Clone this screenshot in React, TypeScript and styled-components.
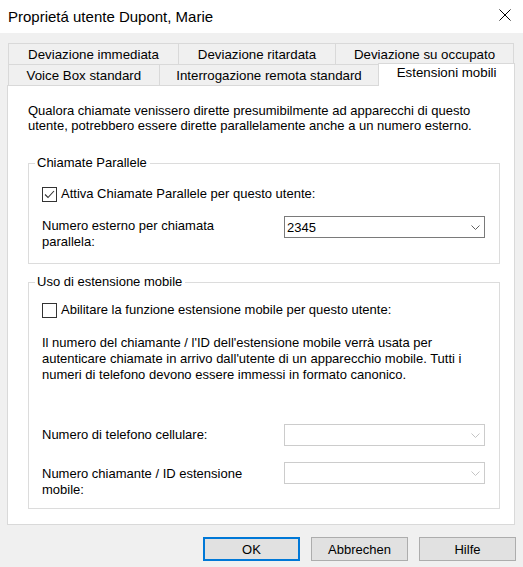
import * as React from 'react';
import styled, {createGlobalStyle} from 'styled-components';

const GlobalStyle = createGlobalStyle`
  html, body {
    margin: 0;
    padding: 0;
    background: #f0f0f0;
  }
  body {
    font-family: "Liberation Sans", Arial, sans-serif;
    font-size: 13px;
    color: #000;
  }
`;

const Window = styled.div`
  width: 523px;
  height: 567px;
  display: flex;
  flex-direction: column;
  background: #f0f0f0;
  overflow: hidden;
`;

const TitleBar = styled.div`
  height: 33px;
  flex-shrink: 0;
  background: #fff;
  display: flex;
  align-items: center;
  justify-content: space-between;
  padding: 0 12px 0 8px;
  font-size: 15px;
`;

const CloseButton = styled.svg`
  width: 12px;
  height: 12px;
  margin-bottom: 4px;
`;

const Body = styled.div`
  padding: 10px 8px 0 7px;
  display: flex;
  flex-direction: column;
`;

const TabRow = styled.div`
  display: flex;
  align-items: flex-start;
  height: 21px;
  padding-left: 1px;
`;

const Tab = styled.div<{ $w: number; $active?: boolean }>`
  box-sizing: border-box;
  width: ${p => p.$w}px;
  height: ${p => (p.$active ? 23 : 21)}px;
  margin-top: ${p => (p.$active ? -1 : 0)}px;
  margin-left: -1px;
  &:first-child {
    margin-left: 0;
  }
  border: 1px solid #d9d9d9;
  border-bottom: 0;
  background: ${p => (p.$active ? '#fff' : '#f0f0f0')};
  position: relative;
  z-index: ${p => (p.$active ? 2 : 1)};
  display: flex;
  justify-content: center;
  align-items: ${p => (p.$active ? 'flex-start' : 'center')};
  padding-top: ${p => (p.$active ? 1 : 0)}px;
  font-size: 13.3px;
  white-space: nowrap;
`;

const Panel = styled.div`
  box-sizing: border-box;
  height: 440px;
  width: 508px;
  background: #fff;
  border: 1px solid #d9d9d9;
  padding: 17px 14px 0 20px;
  display: flex;
  flex-direction: column;
`;

const Description = styled.p`
  margin: 0;
  line-height: 15px;
`;

const GroupBox = styled.div<{ $top: number }>`
  box-sizing: border-box;
  margin-top: ${p => p.$top}px;
  border: 1px solid #dcdcdc;
  padding: 0 13px;
  display: flex;
  flex-direction: column;
`;

const Legend = styled.div`
  width: fit-content;
  margin: -9px 0 0 -7px;
  padding: 0 3px 0 2px;
  background: #fff;
  line-height: 16px;
`;

const CheckRow = styled.label<{ $top: number }>`
  display: flex;
  align-items: center;
  gap: 4px;
  margin-top: ${p => p.$top}px;
  line-height: 16px;
`;

const CheckBox = styled.span`
  box-sizing: border-box;
  width: 15px;
  height: 15px;
  border: 1px solid #333;
  background: #fff;
  display: flex;
  align-items: center;
  justify-content: center;
`;

const FieldRow = styled.div<{ $top: number }>`
  display: grid;
  grid-template-columns: 242px 201px;
  align-items: start;
  margin-top: ${p => p.$top}px;
`;

const FieldLabel = styled.div<{ $offset: number; $center?: boolean }>`
  padding-top: ${p => p.$offset}px;
  line-height: 16px;
  align-self: ${p => (p.$center ? 'center' : 'start')};
`;

const Select = styled.div<{ $disabled?: boolean }>`
  box-sizing: border-box;
  height: 22px;
  border: 1px solid ${p => (p.$disabled ? '#cccccc' : '#7a7a7a')};
  background: #fff;
  display: flex;
  align-items: center;
  justify-content: space-between;
  padding: 0 4px 0 2px;
`;

const Chevron = styled.svg`
  width: 9px;
  height: 5px;
`;

const Paragraph = styled.p`
  margin: 17px 0 0;
  line-height: 16px;
`;

const Spacer = styled.div<{ $h: number }>`
  height: ${p => p.$h}px;
`;

const Footer = styled.div`
  display: flex;
  justify-content: flex-end;
  gap: 11px;
  padding: 12px 0 0;
  margin-right: -1px;
`;

const Button = styled.button<{ $default?: boolean }>`
  box-sizing: border-box;
  width: 97px;
  height: 24px;
  font-family: inherit;
  font-size: 13px;
  color: #000;
  background: #e1e1e1;
  border: ${p => (p.$default ? '2px solid #0078d7' : '1px solid #adadad')};
  padding: 0;
`;

const Check = () => (
    <svg width="11" height="9" viewBox="0 0 11 9">
        <path d="M1 4.5 L4 7.5 L10 1" fill="none" stroke="#333" strokeWidth="1.1"/>
    </svg>
);

const DropDown: React.FC<{ value?: string, disabled?: boolean }> = ({value, disabled}) => (
    <Select $disabled={disabled}>
        <span>{value}</span>
        <Chevron viewBox="0 0 9 5">
            <path d="M0.5 0.5 L4.5 4.5 L8.5 0.5" fill="none" stroke={disabled ? '#c4c4c4' : '#606060'} strokeWidth="1"/>
        </Chevron>
    </Select>
);

const App = () => {
    return (
        <Window>
            <GlobalStyle/>
            <TitleBar>
                <span>Proprietá utente Dupont, Marie</span>
                <CloseButton viewBox="0 0 12 12">
                    <path d="M0.5 0.5 L11.5 11.5 M11.5 0.5 L0.5 11.5" stroke="#000" strokeWidth="1"/>
                </CloseButton>
            </TitleBar>
            <Body>
                <TabRow>
                    <Tab $w={171}>Deviazione immediata</Tab>
                    <Tab $w={158}>Deviazione ritardata</Tab>
                    <Tab $w={179}>Deviazione su occupato</Tab>
                </TabRow>
                <TabRow>
                    <Tab $w={152}>Voice Box standard</Tab>
                    <Tab $w={221}>Interrogazione remota standard</Tab>
                    <Tab $w={137} $active>Estensioni mobili</Tab>
                </TabRow>
                <Panel>
                    <Description>
                        Qualora chiamate venissero dirette presumibilmente ad apparecchi di questo utente, potrebbero essere dirette parallelamente anche a un numero esterno.
                    </Description>
                    <GroupBox $top={30}>
                        <Legend>Chiamate Parallele</Legend>
                        <CheckRow $top={15}>
                            <CheckBox><Check/></CheckBox>
                            Attiva Chiamate Parallele per questo utente:
                        </CheckRow>
                        <FieldRow $top={14}>
                            <FieldLabel $offset={2}>Numero esterno per chiamata<br/>parallela:</FieldLabel>
                            <DropDown value="2345"/>
                        </FieldRow>
                        <Spacer $h={13}/>
                    </GroupBox>
                    <GroupBox $top={18}>
                        <Legend>Uso di estensione mobile</Legend>
                        <CheckRow $top={12}>
                            <CheckBox/>
                            Abilitare la funzione estensione mobile per questo utente:
                        </CheckRow>
                        <Paragraph>
                            Il numero del chiamante / l'ID dell'estensione mobile verrà usata per autenticare chiamate in arrivo dall'utente di un apparecchio mobile. Tutti i numeri di telefono devono essere immessi in formato canonico.
                        </Paragraph>
                        <FieldRow $top={41}>
                            <FieldLabel $offset={0} $center>Numero di telefono cellulare:</FieldLabel>
                            <DropDown disabled/>
                        </FieldRow>
                        <FieldRow $top={16}>
                            <FieldLabel $offset={4}>Numero chiamante / ID estensione<br/>mobile:</FieldLabel>
                            <DropDown disabled/>
                        </FieldRow>
                        <Spacer $h={10}/>
                    </GroupBox>
                </Panel>
                <Footer>
                    <Button $default>OK</Button>
                    <Button>Abbrechen</Button>
                    <Button>Hilfe</Button>
                </Footer>
            </Body>
        </Window>
    );
};

export default App;
